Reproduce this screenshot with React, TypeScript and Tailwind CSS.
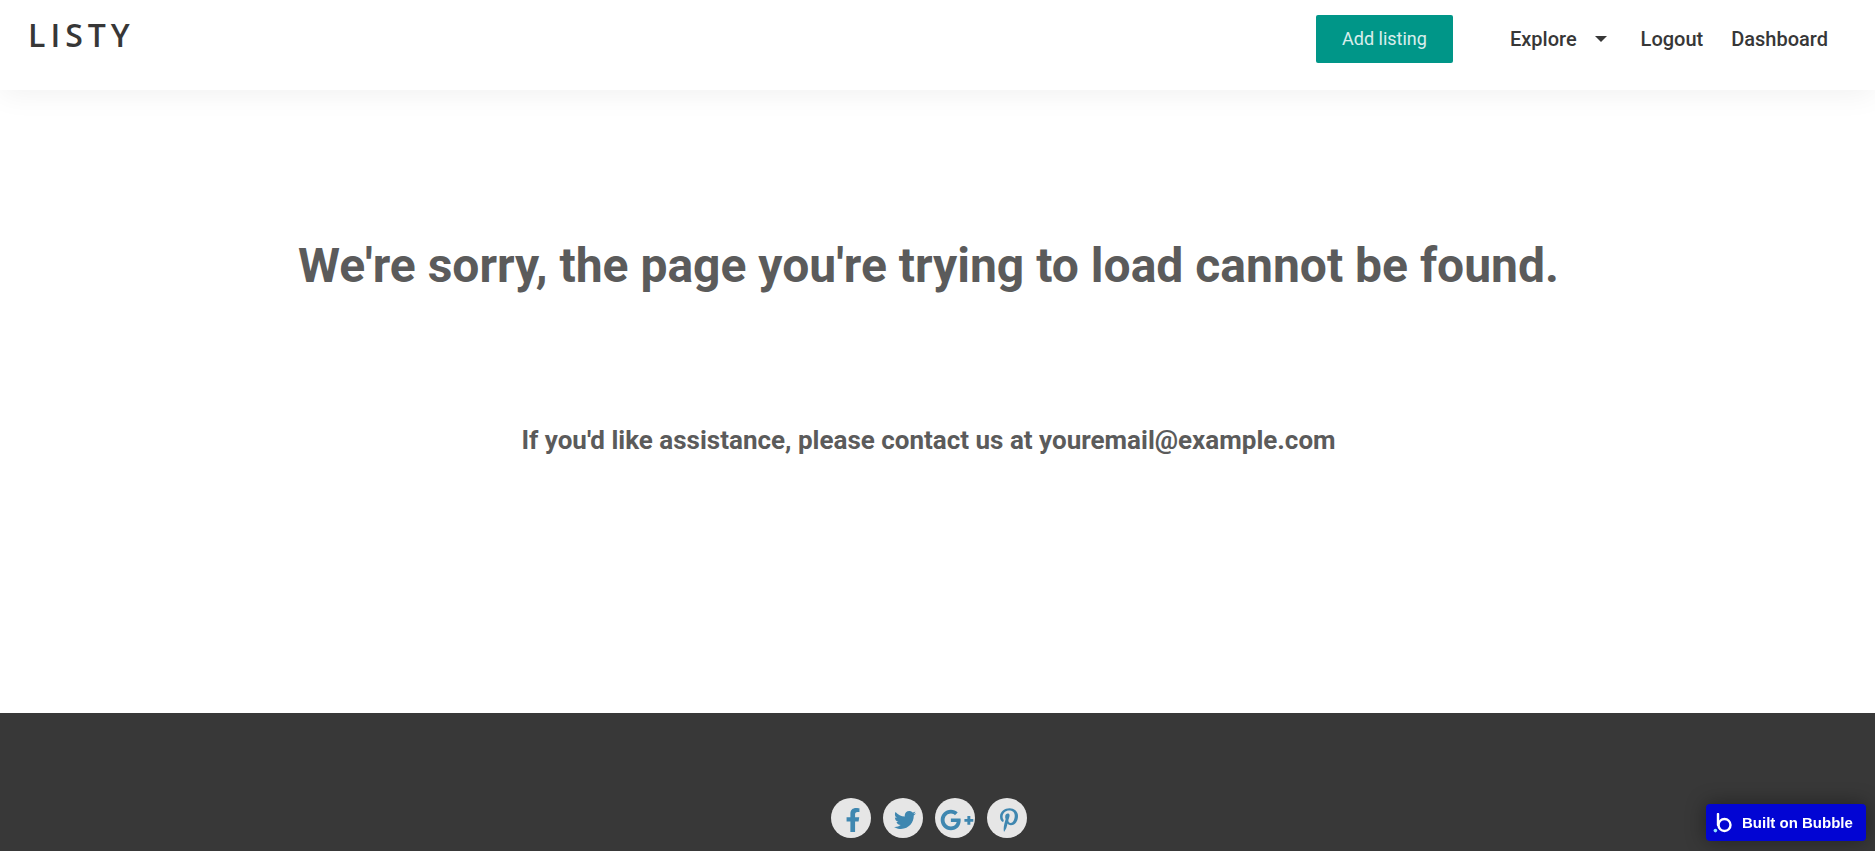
import { FaFacebookF, FaTwitter, FaPinterestP } from 'react-icons/fa';
import { FaGooglePlusG } from 'react-icons/fa6';

const SOCIALS = [
  { label: 'Facebook', icon: <FaFacebookF className="h-6 w-6" /> },
  { label: 'Twitter', icon: <FaTwitter className="h-[22px] w-[22px]" /> },
  { label: 'Google Plus', icon: <FaGooglePlusG className="h-[34px] w-[34px]" /> },
  { label: 'Pinterest', icon: <FaPinterestP className="h-6 w-6" /> },
];

const Header = () => {
  return (
    <header className="flex h-[90px] items-start justify-between bg-white pr-[47px] pl-7 shadow-[0_4px_30px_rgba(0,0,0,0.06)]">
      <a
        href="#"
        className="pt-[13px] font-['Open_Sans',sans-serif] text-[32px] leading-[44px] font-semibold tracking-[5px] text-[#373737]"
      >
        LISTY
      </a>
      <nav className="flex items-center pt-[15px] text-xl font-medium text-[#373737]">
        <button
          type="button"
          className="h-12 w-[137px] rounded-xs bg-[#009688] text-lg font-normal text-white/85"
        >
          Add listing
        </button>
        <button type="button" className="ml-[57px] flex items-center gap-[18px]">
          Explore
          <svg viewBox="0 0 12 6" className="h-[6px] w-3 fill-current">
            <path d="M0 0h12L6 6z" />
          </svg>
        </button>
        <a href="#" className="ml-[34px]">
          Logout
        </a>
        <a href="#" className="ml-7">
          Dashboard
        </a>
      </nav>
    </header>
  );
};

const Footer = () => {
  return (
    <footer className="flex grow justify-center bg-[#383838] pt-[85px] pr-[18px]">
      <ul className="flex gap-3">
        {SOCIALS.map((s) => (
          <li key={s.label}>
            <a
              href="#"
              aria-label={s.label}
              className="flex h-10 w-10 items-center justify-center rounded-full bg-[#e6e6e6] pt-[3px] pl-1 text-[#3f87b0]"
            >
              {s.icon}
            </a>
          </li>
        ))}
      </ul>
    </footer>
  );
};

const BubbleBadge = () => {
  return (
    <a
      href="#"
      className="fixed right-[9px] bottom-[10px] flex h-[37px] w-40 items-center rounded bg-[#0205d3] pt-px pl-[7px] font-['Liberation_Sans',Arial,sans-serif] text-[15px] font-bold text-white shadow-[0_0_20px_rgba(0,0,0,0.4)]"
    >
      <svg viewBox="0 0 20 20" className="mr-[9px] h-5 w-5" fill="none">
        <path d="M5 1v11" stroke="white" strokeWidth="2.4" strokeLinecap="round" />
        <circle cx="11.5" cy="12" r="6" stroke="white" strokeWidth="2.4" />
        <circle cx="2.4" cy="17.6" r="1.8" fill="#8fe3ff" />
      </svg>
      Built on Bubble
    </a>
  );
};

export default function App() {
  return (
    <div className="flex min-h-screen flex-col bg-white font-[Roboto,sans-serif]">
      <Header />
      <main className="flex h-[623px] flex-col items-center pt-[148px] pr-[18px] font-bold text-[#5b5b5b]">
        <h1 className="text-5xl leading-[56px]">
          We're sorry, the page you're trying to load cannot be found.
        </h1>
        <p className="mt-[130px] text-[26px] leading-8">
          If you'd like assistance, please contact us at youremail@example.com
        </p>
      </main>
      <Footer />
      <BubbleBadge />
    </div>
  );
}
